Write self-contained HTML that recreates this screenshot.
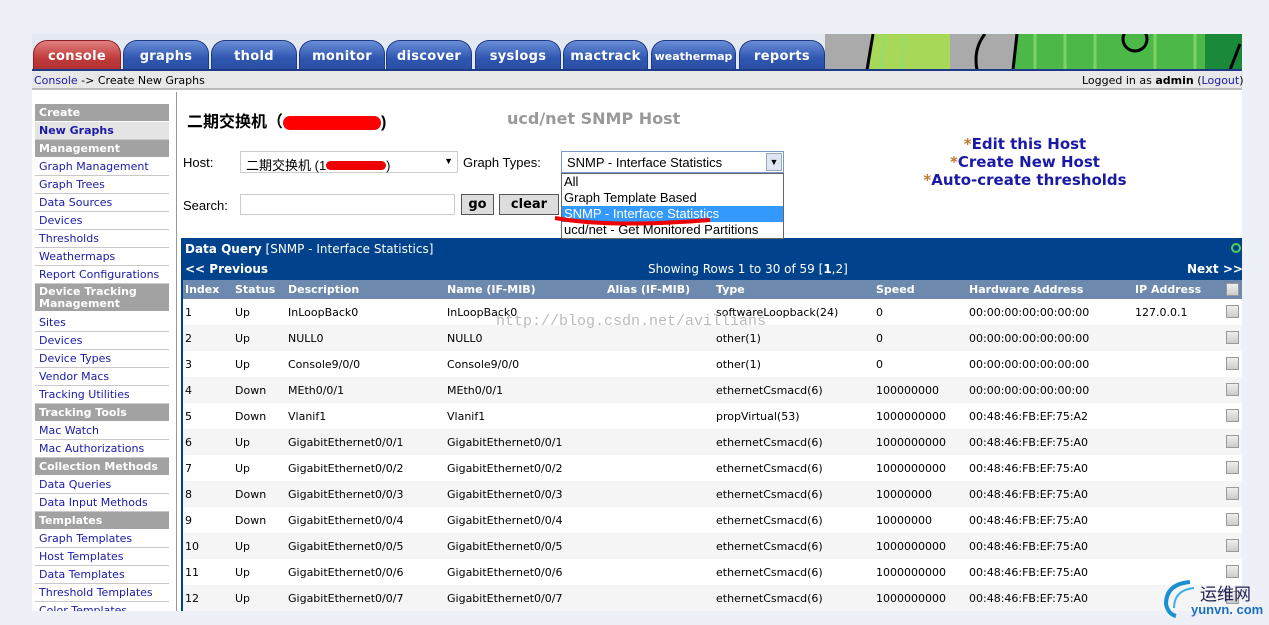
<!DOCTYPE html>
<html><head><meta charset="utf-8">
<style>
*{margin:0;padding:0;box-sizing:border-box}
body{width:1269px;height:625px;overflow:hidden;background:#edf1f7;font-family:Verdana,"DejaVu Sans","Liberation Sans","Noto Sans CJK SC",sans-serif;font-size:11px;position:relative}
.a{position:absolute;white-space:nowrap}
.tab{position:absolute;top:40px;height:30px;border-radius:14px 14px 0 0;background:linear-gradient(#6a8ed6,#2f56b0 60%,#2a4fa3);color:#fff;font-weight:bold;font-size:13px;text-align:center;line-height:32px;border:1px solid #1c3a86;border-bottom:none;letter-spacing:.3px;overflow:hidden}
.side div{position:absolute;left:35px;width:134px;height:18px;line-height:18px;padding-left:4px;color:#1a1aa6;font-size:11px;border-bottom:1px solid #c8c8c8;white-space:nowrap}
.side div.h{background:#a2a2a2;color:#fff;font-weight:bold;border-bottom:1px solid #fff}
.row{position:absolute;left:181px;width:1061px;height:26px}
.row span{position:absolute;top:7px;font-size:11px;white-space:nowrap;color:#000}
.cb{position:absolute;left:1045px;top:6px;width:13px;height:13px;border:1px solid #999;background:linear-gradient(#eee,#ccc)}
</style></head><body>
<div class="a" style="left:32px;top:34px;width:1210px;height:577px;background:#fff"></div>
<div class="a" style="left:32px;top:34px;width:1210px;height:36px;background:#e4e9f1"></div>
<svg class="a" style="left:825px;top:34px" width="417" height="36">
<rect width="417" height="36" fill="#aaa"/>
<rect x="45" width="80" height="36" fill="#a8d858"/>
<rect x="190" width="227" height="36" fill="#4cb848"/>
<g stroke="#8ee070" stroke-width="3" opacity=".7"><line x1="60" y1="0" x2="55" y2="36"/><line x1="80" y1="0" x2="77" y2="36"/><line x1="210" y1="0" x2="210" y2="36"/><line x1="240" y1="0" x2="240" y2="36"/><line x1="270" y1="0" x2="270" y2="36"/><line x1="330" y1="0" x2="330" y2="36"/><line x1="370" y1="0" x2="370" y2="36"/></g>
<rect x="380" width="37" height="36" fill="#1a8a3a"/>
<path d="M48 0 L42 36 M160 0 Q148 15 152 36 M192 0 L188 36 M415 10 L405 36" stroke="#000" stroke-width="3" fill="none"/>
<ellipse cx="310" cy="5" rx="12" ry="12" stroke="#000" stroke-width="3" fill="none"/>
</svg>
<div class="tab" style="left:33px;width:88px;background:linear-gradient(#e08080,#c03b3b 60%,#b03030);border-color:#8a2020">console</div>
<div class="tab" style="left:123px;width:86px">graphs</div>
<div class="tab" style="left:211px;width:86px">thold</div>
<div class="tab" style="left:299px;width:86px">monitor</div>
<div class="tab" style="left:386px;width:86px">discover</div>
<div class="tab" style="left:475px;width:86px">syslogs</div>
<div class="tab" style="left:563px;width:85px">mactrack</div>
<div class="tab" style="left:651px;width:85px;font-size:11px;letter-spacing:0">weathermap</div>
<div class="tab" style="left:739px;width:86px">reports</div>
<div class="a" style="left:32px;top:69px;width:1210px;height:2px;background:#1c3a86"></div>
<div class="a" style="left:32px;top:71px;width:1210px;height:19px;background:#e8e8e8;border-bottom:2px solid #bbb"></div>
<div class="a" style="left:34px;top:74px;font-size:11px"><span style="color:#1a1aa6">Console</span> -&gt; Create New Graphs</div>
<div class="a" style="left:1082px;top:74px;font-size:11px">Logged in as <b>admin</b> (<span style="color:#1a1aa6">Logout</span>)</div>
<div class="a" style="left:176px;top:92px;width:1px;height:519px;background:#999"></div>
<div class="side">
<div class="h" style="top:104px">Create</div>
<div style="top:122px;background:#e4e4e4;font-weight:bold">New Graphs</div>
<div class="h" style="top:140px">Management</div>
<div style="top:158px">Graph Management</div>
<div style="top:176px">Graph Trees</div>
<div style="top:194px">Data Sources</div>
<div style="top:212px">Devices</div>
<div style="top:230px">Thresholds</div>
<div style="top:248px">Weathermaps</div>
<div style="top:266px">Report Configurations</div>
<div class="h" style="top:284px;height:28px;line-height:12px;padding-top:2px;white-space:normal">Device Tracking Management</div>
<div style="top:314px">Sites</div>
<div style="top:332px">Devices</div>
<div style="top:350px">Device Types</div>
<div style="top:368px">Vendor Macs</div>
<div style="top:386px">Tracking Utilities</div>
<div class="h" style="top:404px">Tracking Tools</div>
<div style="top:422px">Mac Watch</div>
<div style="top:440px">Mac Authorizations</div>
<div class="h" style="top:458px">Collection Methods</div>
<div style="top:476px">Data Queries</div>
<div style="top:494px">Data Input Methods</div>
<div class="h" style="top:512px">Templates</div>
<div style="top:530px">Graph Templates</div>
<div style="top:548px">Host Templates</div>
<div style="top:566px">Data Templates</div>
<div style="top:584px">Threshold Templates</div>
<div style="top:602px;height:9px;overflow:hidden;border:none">Color Templates</div>
</div>
<div class="a" style="left:187px;top:108px;font-size:16px;font-weight:bold;font-family:'Liberation Sans','Noto Sans CJK SC',sans-serif">二期交换机（<span style="display:inline-block;width:98px;height:14px;background:#f00;border-radius:7px;vertical-align:middle"></span>)</div>
<div class="a" style="left:507px;top:109px;font-size:16px;font-weight:bold;color:#999">ucd/net SNMP Host</div>
<div class="a" style="left:183px;top:155px;font-size:13px;font-family:'Liberation Sans',sans-serif">Host:</div>
<div class="a" style="left:240px;top:151px;width:218px;height:22px;border:1px solid #ccc;font-size:13px;padding:3px 5px;font-family:'Liberation Sans','Noto Sans CJK SC',sans-serif">二期交换机 (1<span style="display:inline-block;width:60px;height:9px;background:#e00;border-radius:5px"></span>)<span style="position:absolute;right:4px;top:4px;font-size:9px">▼</span></div>
<div class="a" style="left:463px;top:155px;font-size:13px;font-family:'Liberation Sans',sans-serif">Graph Types:</div>
<div class="a" style="left:561px;top:151px;width:223px;height:22px;border:1px solid #7a9ac8;font-size:13px;padding:3px 5px;font-family:'Liberation Sans',sans-serif">SNMP - Interface Statistics<span style="position:absolute;right:1px;top:1px;width:16px;height:18px;background:#dde6f2;border:1px solid #9ab;font-size:9px;text-align:center;line-height:17px">▼</span></div>
<div class="a" style="left:561px;top:173px;width:223px;height:66px;border:1px solid #666;background:#fff;font-size:13px;font-family:'Liberation Sans',sans-serif;line-height:16px;z-index:2">
<div style="padding-left:2px">All</div><div style="padding-left:2px">Graph Template Based</div><div style="padding-left:2px;background:#3399ff;color:#fff">SNMP - Interface Statistics</div><div style="padding-left:2px">ucd/net - Get Monitored Partitions</div></div>
<svg class="a" style="left:550px;top:210px;z-index:3" width="180" height="20"><path d="M5 8 Q60 18 160 10" stroke="#e00" stroke-width="4" fill="none"/></svg>
<div class="a" style="left:183px;top:198px;font-size:13px;font-family:'Liberation Sans',sans-serif">Search:</div>
<div class="a" style="left:240px;top:194px;width:215px;height:21px;border:1px solid #ccc"></div>
<div class="a" style="left:461px;top:194px;width:33px;height:21px;border:1px solid #555;background:#ddd;font-weight:bold;font-size:13px;text-align:center;line-height:19px">go</div>
<div class="a" style="left:499px;top:194px;width:60px;height:21px;border:1px solid #555;background:#ddd;font-weight:bold;font-size:13px;text-align:center;line-height:19px">clear</div>
<div class="a" style="left:880px;top:135px;width:290px;text-align:center;font-size:15px;font-weight:bold;color:#1a1aa6;line-height:18px"><span style="color:#c07830">*</span>Edit this Host<br><span style="color:#c07830">*</span>Create New Host<br><span style="color:#c07830">*</span>Auto-create thresholds</div>
<div class="a" style="left:181px;top:238px;width:1061px;height:42px;background:#00438c"></div>
<div class="a" style="left:185px;top:242px;color:#fff;font-size:12px"><b>Data Query</b> [SNMP - Interface Statistics]</div>
<div class="a" style="left:1231px;top:243px;width:10px;height:10px;border:2px solid #5c5;border-radius:50%"></div>
<div class="a" style="left:185px;top:262px;color:#fff;font-size:12px;font-weight:bold">&lt;&lt; Previous</div>
<div class="a" style="left:648px;top:262px;color:#fff;font-size:12px">Showing Rows 1 to 30 of 59 [<b>1</b>,2]</div>
<div class="a" style="left:1187px;top:262px;color:#fff;font-size:12px;font-weight:bold">Next &gt;&gt;</div>
<div class="row" style="top:280px;height:19px;background:#6e89ae">
<span style="left:4px;top:3px;color:#fff;font-weight:bold">Index</span><span style="left:54px;top:3px;color:#fff;font-weight:bold">Status</span><span style="left:107px;top:3px;color:#fff;font-weight:bold">Description</span><span style="left:266px;top:3px;color:#fff;font-weight:bold">Name (IF-MIB)</span><span style="left:426px;top:3px;color:#fff;font-weight:bold">Alias (IF-MIB)</span><span style="left:535px;top:3px;color:#fff;font-weight:bold">Type</span><span style="left:695px;top:3px;color:#fff;font-weight:bold">Speed</span><span style="left:788px;top:3px;color:#fff;font-weight:bold">Hardware Address</span><span style="left:954px;top:3px;color:#fff;font-weight:bold">IP Address</span><div class="cb" style="top:3px"></div></div>
<div class="row" style="top:299px;background:#fff"><span style="left:4px">1</span><span style="left:54px">Up</span><span style="left:107px">InLoopBack0</span><span style="left:266px">InLoopBack0</span><span style="left:535px">softwareLoopback(24)</span><span style="left:695px">0</span><span style="left:788px">00:00:00:00:00:00:00</span><span style="left:954px">127.0.0.1</span><div class="cb"></div></div>
<div class="row" style="top:325px;background:#f5f5f5"><span style="left:4px">2</span><span style="left:54px">Up</span><span style="left:107px">NULL0</span><span style="left:266px">NULL0</span><span style="left:535px">other(1)</span><span style="left:695px">0</span><span style="left:788px">00:00:00:00:00:00:00</span><div class="cb"></div></div>
<div class="row" style="top:351px;background:#fff"><span style="left:4px">3</span><span style="left:54px">Up</span><span style="left:107px">Console9/0/0</span><span style="left:266px">Console9/0/0</span><span style="left:535px">other(1)</span><span style="left:695px">0</span><span style="left:788px">00:00:00:00:00:00:00</span><div class="cb"></div></div>
<div class="row" style="top:377px;background:#f5f5f5"><span style="left:4px">4</span><span style="left:54px">Down</span><span style="left:107px">MEth0/0/1</span><span style="left:266px">MEth0/0/1</span><span style="left:535px">ethernetCsmacd(6)</span><span style="left:695px">100000000</span><span style="left:788px">00:00:00:00:00:00:00</span><div class="cb"></div></div>
<div class="row" style="top:403px;background:#fff"><span style="left:4px">5</span><span style="left:54px">Down</span><span style="left:107px">Vlanif1</span><span style="left:266px">Vlanif1</span><span style="left:535px">propVirtual(53)</span><span style="left:695px">1000000000</span><span style="left:788px">00:48:46:FB:EF:75:A2</span><div class="cb"></div></div>
<div class="row" style="top:429px;background:#f5f5f5"><span style="left:4px">6</span><span style="left:54px">Up</span><span style="left:107px">GigabitEthernet0/0/1</span><span style="left:266px">GigabitEthernet0/0/1</span><span style="left:535px">ethernetCsmacd(6)</span><span style="left:695px">1000000000</span><span style="left:788px">00:48:46:FB:EF:75:A0</span><div class="cb"></div></div>
<div class="row" style="top:455px;background:#fff"><span style="left:4px">7</span><span style="left:54px">Up</span><span style="left:107px">GigabitEthernet0/0/2</span><span style="left:266px">GigabitEthernet0/0/2</span><span style="left:535px">ethernetCsmacd(6)</span><span style="left:695px">1000000000</span><span style="left:788px">00:48:46:FB:EF:75:A0</span><div class="cb"></div></div>
<div class="row" style="top:481px;background:#f5f5f5"><span style="left:4px">8</span><span style="left:54px">Down</span><span style="left:107px">GigabitEthernet0/0/3</span><span style="left:266px">GigabitEthernet0/0/3</span><span style="left:535px">ethernetCsmacd(6)</span><span style="left:695px">10000000</span><span style="left:788px">00:48:46:FB:EF:75:A0</span><div class="cb"></div></div>
<div class="row" style="top:507px;background:#fff"><span style="left:4px">9</span><span style="left:54px">Down</span><span style="left:107px">GigabitEthernet0/0/4</span><span style="left:266px">GigabitEthernet0/0/4</span><span style="left:535px">ethernetCsmacd(6)</span><span style="left:695px">10000000</span><span style="left:788px">00:48:46:FB:EF:75:A0</span><div class="cb"></div></div>
<div class="row" style="top:533px;background:#f5f5f5"><span style="left:4px">10</span><span style="left:54px">Up</span><span style="left:107px">GigabitEthernet0/0/5</span><span style="left:266px">GigabitEthernet0/0/5</span><span style="left:535px">ethernetCsmacd(6)</span><span style="left:695px">1000000000</span><span style="left:788px">00:48:46:FB:EF:75:A0</span><div class="cb"></div></div>
<div class="row" style="top:559px;background:#fff"><span style="left:4px">11</span><span style="left:54px">Up</span><span style="left:107px">GigabitEthernet0/0/6</span><span style="left:266px">GigabitEthernet0/0/6</span><span style="left:535px">ethernetCsmacd(6)</span><span style="left:695px">1000000000</span><span style="left:788px">00:48:46:FB:EF:75:A0</span><div class="cb"></div></div>
<div class="row" style="top:585px;height:26px;background:#f5f5f5"><span style="left:4px">12</span><span style="left:54px">Up</span><span style="left:107px">GigabitEthernet0/0/7</span><span style="left:266px">GigabitEthernet0/0/7</span><span style="left:535px">ethernetCsmacd(6)</span><span style="left:695px">1000000000</span><span style="left:788px">00:48:46:FB:EF:75:A0</span><div class="cb"></div></div>
<div class="a" style="left:181px;top:238px;width:2px;height:373px;background:#00438c"></div>
<div class="a" style="left:496px;top:313px;font-family:'Liberation Mono',monospace;font-size:15px;color:#bbb">http://blog.csdn.net/avillians</div>
<svg class="a" style="left:1160px;top:578px" width="40" height="40"><path d="M30 4 Q6 6 6 26 Q8 36 16 38" stroke="#1b8fd0" stroke-width="4" fill="none"/><path d="M34 10 Q14 12 14 30" stroke="#3fb0e8" stroke-width="2" fill="none"/></svg>
<div class="a" style="left:1200px;top:580px;font-size:17px;color:#225;font-family:'Liberation Sans','Noto Sans CJK SC',sans-serif">运维网</div>
<div class="a" style="left:1191px;top:602px;font-size:13px;font-weight:bold;color:#1b6fc0;font-family:'Liberation Sans',sans-serif">yunvn. com</div>
</body></html>
